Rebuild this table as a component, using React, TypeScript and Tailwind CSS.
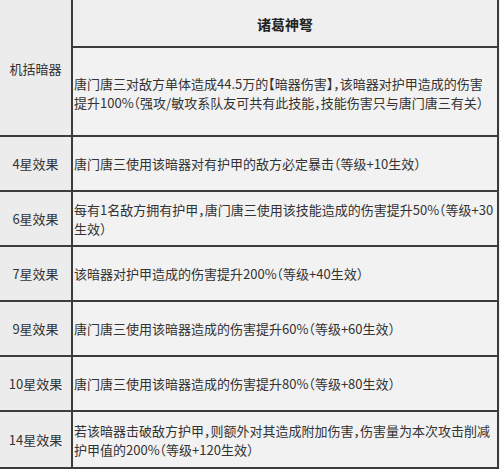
import React from "react";

const rows: { label: string; lines: string[]; h: string }[] = [
  { label: "4星效果", lines: ["唐门唐三使用该暗器对有护甲的敌方必定暴击（等级+10生效）"], h: "h-[55px]" },
  {
    label: "6星效果",
    lines: ["每有1名敌方拥有护甲，唐门唐三使用该技能造成的伤害提升50%（等级+30", "生效）"],
    h: "h-[55px]",
  },
  { label: "7星效果", lines: ["该暗器对护甲造成的伤害提升200%（等级+40生效）"], h: "h-[55px]" },
  { label: "9星效果", lines: ["唐门唐三使用该暗器造成的伤害提升60%（等级+60生效）"], h: "h-[55px]" },
  { label: "10星效果", lines: ["唐门唐三使用该暗器造成的伤害提升80%（等级+80生效）"], h: "h-[55px]" },
  {
    label: "14星效果",
    lines: ["若该暗器击破敌方护甲，则额外对其造成附加伤害，伤害量为本次攻击削减", "护甲值的200%（等级+120生效）"],
    h: "h-[57px]",
  },
];

function Lines({ lines }: { lines: string[] }) {
  return (
    <p className="whitespace-nowrap leading-[19px]">
      {lines.map((l, i) => (
        <React.Fragment key={i}>
          {i > 0 && <br />}
          {l}
        </React.Fragment>
      ))}
    </p>
  );
}

export default function App() {
  return (
    <div
      className="w-[500px] h-[469px] bg-[#f1f1f1] text-[13px] text-[#333] [font-feature-settings:'halt']"
      style={{ fontFamily: '"Noto Sans CJK SC", "Noto Sans", sans-serif' }}
    >
      <div className="w-[499px] grid grid-cols-[73px_1fr] border-r-2 border-[#3c3c3c]">
        <div className="row-span-2 h-[137px] bg-[#ececec] border-r-2 border-b-2 border-[#3c3c3c] flex items-center justify-center pt-[3px]">
          机括暗器
        </div>
        <div className="h-[48px] bg-[#efefef] border-b-2 border-[#3c3c3c] flex items-center justify-center pt-[3px]">
          <span className="font-bold text-[14px] text-[#222]">诸葛神弩</span>
        </div>
        <div className="h-[89px] bg-[#f2f2f2] border-b-2 border-[#3c3c3c] flex items-center pl-[1px] pt-[3px]">
          <Lines
            lines={[
              "唐门唐三对敌方单体造成44.5万的【暗器伤害】，该暗器对护甲造成的伤害",
              "提升100%（强攻/敏攻系队友可共有此技能，技能伤害只与唐门唐三有关）",
            ]}
          />
        </div>
        {rows.map((r) => (
          <React.Fragment key={r.label}>
            <div
              className={`${r.h} bg-[#ececec] border-r-2 border-b-2 border-[#3c3c3c] flex items-center justify-center`}
            >
              {r.label}
            </div>
            <div className={`${r.h} bg-[#f2f2f2] border-b-2 border-[#3c3c3c] flex items-center pl-[1px]`}>
              <Lines lines={r.lines} />
            </div>
          </React.Fragment>
        ))}
      </div>
    </div>
  );
}
